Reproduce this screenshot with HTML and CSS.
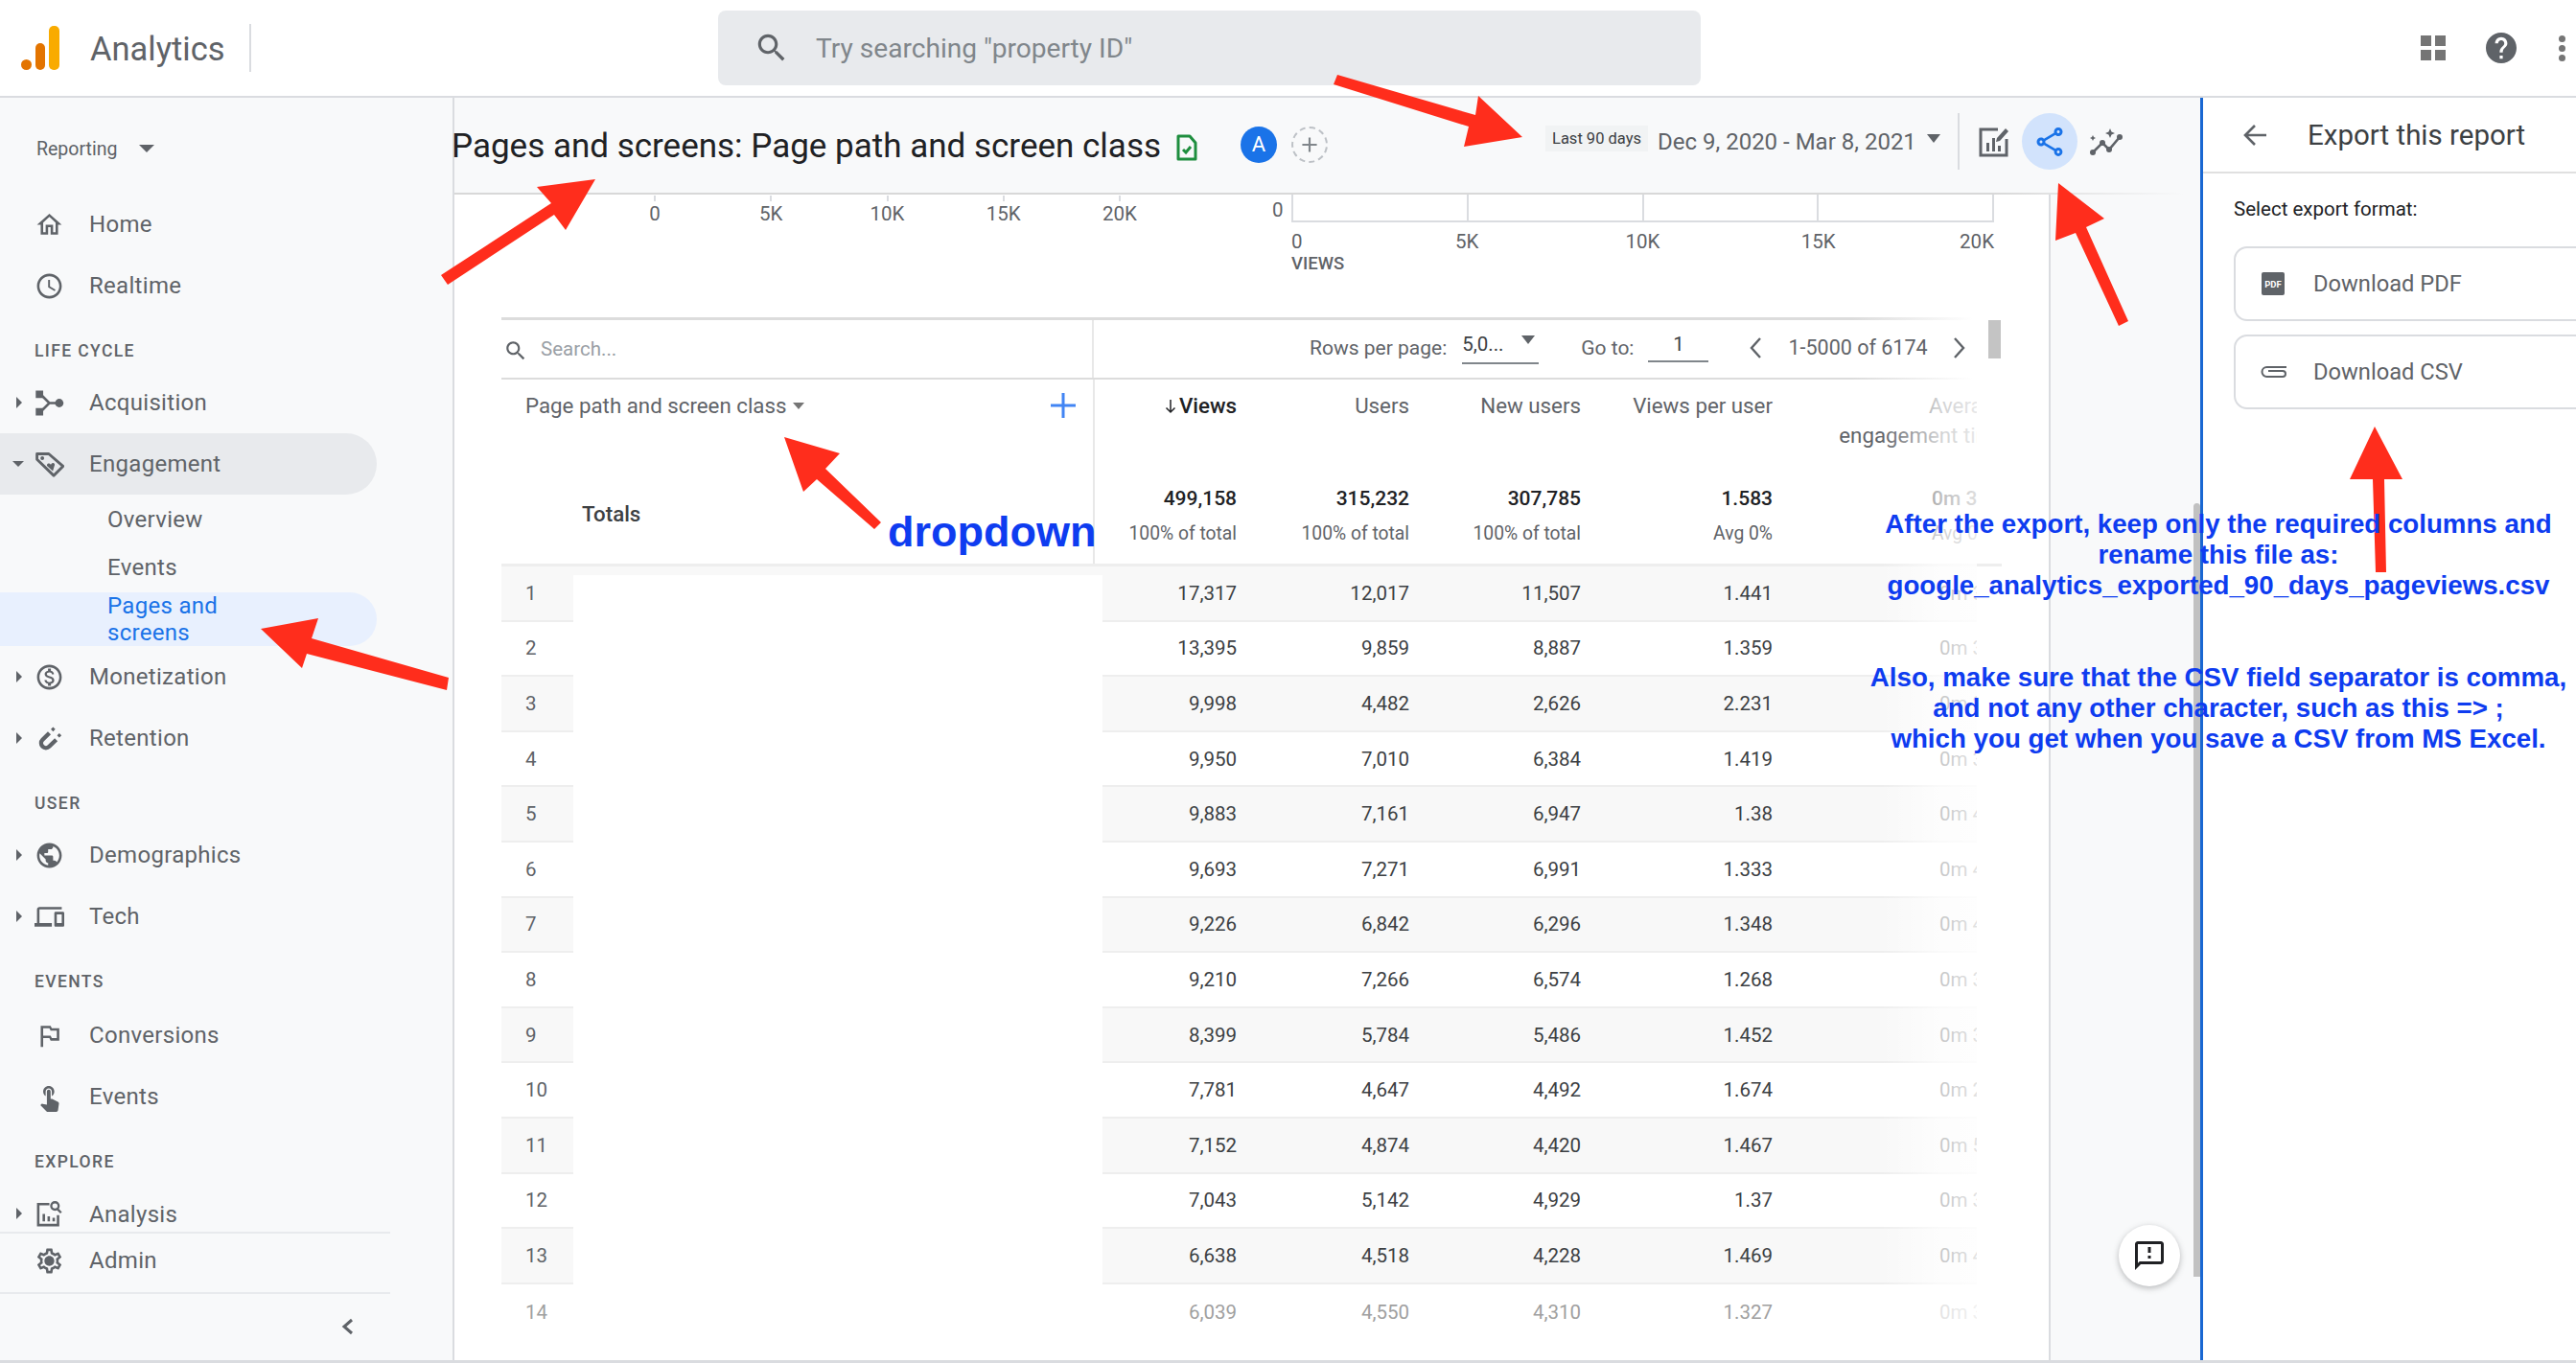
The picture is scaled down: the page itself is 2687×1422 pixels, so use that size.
FILE: index.html
```html
<!DOCTYPE html>
<html lang="en">
<head>
    <meta charset="UTF-8">
    <title>Analytics - Pages and screens</title>
    <link rel="stylesheet" href="styles.css">
</head>
<body>
<div class="app">

    <header class="topbar">
        <div class="brand">
            <svg class="logo" viewBox="0 0 40 46"><circle cx="5.5" cy="40.5" r="5.5" fill="#e37400"/><rect x="15" y="18" width="10" height="28" rx="5" fill="#e37400"/><rect x="29" y="0" width="11" height="46" rx="5" fill="#f9ab00"/></svg>
            <span class="brand-name">Analytics</span>
        </div>
        <div class="global-search">
            <svg class="icon-search" viewBox="0 0 24 24"><path d="M15.5 14h-.79l-.28-.27C15.41 12.59 16 11.11 16 9.5 16 5.91 13.09 3 9.5 3S3 5.91 3 9.5 5.91 16 9.5 16c1.61 0 3.09-.59 4.23-1.57l.27.28v.79l5 4.99L20.49 19l-4.99-5zm-6 0C7.01 14 5 11.99 5 9.5S7.01 5 9.5 5 14 7.01 14 9.5 11.99 14 9.5 14z"/></svg>
            <span>Try searching "property ID"</span>
        </div>
        <div class="top-actions">
            <div class="apps"><i></i><i></i><i></i><i></i></div>
            <svg class="icon-help" viewBox="2 2 20 20"><path d="M12 2C6.48 2 2 6.48 2 12s4.48 10 10 10 10-4.48 10-10S17.52 2 12 2zm1 17h-2v-2h2v2zm2.07-7.75l-.9.92C13.45 12.9 13 13.5 13 15h-2v-.5c0-1.1.45-2.1 1.17-2.83l1.24-1.26c.37-.36.59-.86.59-1.41 0-1.1-.9-2-2-2s-2 .9-2 2H8c0-2.21 1.79-4 4-4s4 1.79 4 4c0 .88-.36 1.68-.93 2.25z"/></svg>
            <div class="more"><i></i><i></i><i></i></div>
        </div>
    </header>

    <div class="workspace">
        <aside class="sidebar">
            <div class="reporting"><span>Reporting</span><b class="caret"></b></div>
            <nav class="nav">
                <a class="nav-item">
                    <svg viewBox="0 0 24 24"><path d="M12 5.69l5 4.5V18h-2v-6H9v6H7v-7.81l5-4.5M12 3L2 12h3v8h6v-6h2v6h6v-8h3L12 3z"/></svg>Home
                </a>
                <a class="nav-item">
                    <svg viewBox="0 0 24 24"><path d="M11.99 2C6.47 2 2 6.48 2 12s4.47 10 9.99 10C17.52 22 22 17.52 22 12S17.52 2 11.99 2zM12 20c-4.42 0-8-3.58-8-8s3.58-8 8-8 8 3.58 8 8-3.58 8-8 8zm.5-13H11v6l5.25 3.15.75-1.23-4.5-2.67z"/></svg>Realtime
                </a>
                <div class="nav-label">LIFE CYCLE</div>
                <a class="nav-item has-arrow">
                    <svg viewBox="0 0 24 24"><path d="M1 2h6v6H1zM1 16h6v6H1z"/><path d="M6 6l6 6-6 6M12 12h7" fill="none" stroke="#5f6368" stroke-width="2"/><circle cx="20" cy="12" r="3.4"/></svg>Acquisition
                </a>
                <a class="nav-item open">
                    <svg viewBox="0 0 24 24"><path d="M2 8V3.500h9.500L23 13.500l-7.500 7.500z" fill="none" stroke="#5f6368" stroke-width="2.200" stroke-linejoin="round"/><circle cx="6.300" cy="7" r="1.500"/><path d="M14.800 17.500l-4.300-3.900c-1.400-1.300.5-3.200 2-2l.7.6.5-.8c1.300-1.400 3.500.4 2.300 1.900z"/></svg>Engagement
                </a>
                <a class="nav-sub">Overview</a>
                <a class="nav-sub">Events</a>
                <a class="nav-sub active">Pages and<br>screens</a>
                <a class="nav-item has-arrow">
                    <svg viewBox="0 0 24 24"><path d="M12 2C6.48 2 2 6.48 2 12s4.48 10 10 10 10-4.48 10-10S17.52 2 12 2zm0 18c-4.41 0-8-3.59-8-8s3.59-8 8-8 8 3.59 8 8-3.59 8-8 8zm.31-8.860c-1.770-.45-2.340-.94-2.340-1.670 0-.84.79-1.430 2.100-1.430 1.380 0 1.900.66 1.940 1.640h1.710c-.05-1.340-.87-2.570-2.490-2.970V5H10.900v1.690c-1.510.32-2.720 1.300-2.720 2.810 0 1.790 1.490 2.690 3.660 3.210 1.950.46 2.340 1.150 2.340 1.870 0 .53-.39 1.390-2.100 1.390-1.600 0-2.230-.72-2.320-1.640H8.040c.1 1.700 1.360 2.660 2.860 2.970V19h2.340v-1.670c1.520-.29 2.720-1.160 2.730-2.770-.01-2.200-1.900-2.960-3.660-3.420z"/></svg>Monetization
                </a>
                <a class="nav-item has-arrow">
                    <svg viewBox="0 0 24 24"><path d="M12 7.500L6.500 13a3.800 3.800 0 0 0 5.400 5.400l5.600-5.400" fill="none" stroke="#5f6368" stroke-width="3.400"/><path d="M15 2.700l1.800 1.800L15 6.300l-1.800-1.800zM20 7.700l1.800 1.800-1.800 1.800-1.800-1.800z"/></svg>Retention
                </a>
                <div class="nav-label">USER</div>
                <a class="nav-item has-arrow">
                    <svg viewBox="0 0 24 24"><path d="M12 2C6.48 2 2 6.48 2 12s4.48 10 10 10 10-4.48 10-10S17.52 2 12 2zm-1 17.930c-3.950-.49-7-3.850-7-7.930 0-.62.08-1.210.21-1.790L9 15v1c0 1.100.9 2 2 2v1.930zm6.900-2.540c-.26-.81-1-1.390-1.900-1.390h-1v-3c0-.55-.45-1-1-1H8v-2h2c.55 0 1-.45 1-1V7h2c1.100 0 2-.9 2-2v-.41c2.930 1.190 5 4.060 5 7.410 0 2.080-.8 3.970-2.100 5.390z"/></svg>Demographics
                </a>
                <a class="nav-item has-arrow">
                    <svg viewBox="0 0 24 24"><path d="M4 6h18V4H4c-1.100 0-2 .9-2 2v11H0v3h14v-3H4V6zm19 2h-6c-.55 0-1 .45-1 1v10c0 .55.45 1 1 1h6c.55 0 1-.45 1-1V9c0-.55-.45-1-1-1zm-1 9h-4v-7h4v7z"/></svg>Tech
                </a>
                <div class="nav-label tall">EVENTS</div>
                <a class="nav-item">
                    <svg viewBox="0 0 24 24"><path d="M14 6l-1-2H5v17h2v-7h5l1 2h7V6h-6zm4 8h-4l-1-2H7V6h5l1 2h5v6z"/></svg>Conversions
                </a>
                <a class="nav-item">
                    <svg viewBox="0 0 24 24"><path d="M9 11.240V7.500C9 6.120 10.120 5 11.500 5S14 6.120 14 7.500v3.740c1.210-.81 2-2.180 2-3.740C16 5.010 13.990 3 11.500 3S7 5.010 7 7.500c0 1.560.79 2.930 2 3.740zm9.840 4.630l-4.540-2.260c-.17-.07-.35-.11-.54-.11H13v-6c0-.83-.67-1.500-1.500-1.500S10 6.670 10 7.500v10.740l-3.430-.72c-.08-.01-.15-.03-.24-.03-.31 0-.59.13-.79.33l-.79.8 4.940 4.940c.27.27.65.44 1.060.44h6.790c.75 0 1.330-.55 1.440-1.280l.75-5.270c.01-.07.02-.14.02-.2 0-.62-.38-1.160-.91-1.380z"/></svg>Events
                </a>
                <div class="nav-label">EXPLORE</div>
                <a class="nav-item has-arrow clipped">
                    <svg viewBox="0 0 24 24"><path d="M12 4H3v17h16v-8" fill="none" stroke="#5f6368" stroke-width="2"/><path d="M6.500 12h2v6h-2zM10.500 14h2v4h-2zM14.500 15h2v3h-2z"/><circle cx="16.500" cy="5.500" r="3" fill="none" stroke="#5f6368" stroke-width="1.800"/><path d="M18.500 8l3 3" stroke="#5f6368" stroke-width="1.800"/></svg>Analysis
                </a>
            </nav>
            <a class="nav-item admin">
                <svg viewBox="0 0 24 24"><path d="M19.430 12.980c.04-.32.07-.64.07-.98 0-.34-.03-.66-.07-.98l2.110-1.650c.19-.15.24-.42.12-.64l-2-3.460c-.09-.16-.26-.25-.44-.25-.06 0-.12.01-.17.03l-2.490 1c-.52-.4-1.080-.73-1.690-.98l-.38-2.650C14.460 2.180 14.250 2 14 2h-4c-.25 0-.46.18-.49.42l-.38 2.650c-.61.25-1.170.59-1.690.98l-2.490-1c-.06-.02-.12-.03-.18-.03-.17 0-.34.09-.43.25l-2 3.460c-.13.22-.07.49.12.64l2.110 1.650c-.04.32-.07.65-.07.98 0 .33.03.66.07.98l-2.110 1.650c-.19.15-.24.42-.12.64l2 3.460c.09.16.26.25.44.25.06 0 .12-.01.17-.03l2.490-1c.52.4 1.080.73 1.690.98l.38 2.650c.03.24.24.42.49.42h4c.25 0 .46-.18.49-.42l.38-2.650c.61-.25 1.170-.59 1.690-.98l2.490 1c.06.02.12.03.18.03.17 0 .34-.09.43-.25l2-3.460c.12-.22.07-.49-.12-.64l-2.110-1.650zm-1.980-1.710c.04.31.05.52.05.73 0 .21-.02.43-.05.73l-.14 1.130.89.7 1.080.84-.7 1.210-1.270-.51-1.040-.42-.9.68c-.43.32-.84.56-1.250.73l-1.060.43-.16 1.130-.2 1.350h-1.400l-.19-1.350-.16-1.130-1.060-.43c-.43-.18-.83-.41-1.230-.71l-.91-.7-1.060.43-1.270.51-.7-1.210 1.080-.84.89-.7-.14-1.130c-.03-.31-.05-.54-.05-.74s.02-.43.05-.73l.14-1.130-.89-.7-1.080-.84.7-1.210 1.270.51 1.040.42.9-.68c.43-.32.84-.56 1.250-.73l1.060-.43.16-1.130.2-1.350h1.390l.19 1.350.16 1.130 1.060.43c.43.18.83.41 1.230.71l.91.7 1.060-.43 1.270-.51.7 1.210-1.070.85-.89.7.14 1.130zM12 8c-2.210 0-4 1.790-4 4s1.790 4 4 4 4-1.790 4-4-1.790-4-4-4z"/></svg>Admin
            </a>
            <div class="collapse">
                <svg viewBox="0 0 14 20"><path d="M11 3L3 10l8 7" fill="none" stroke="#5f6368" stroke-width="3"/></svg>
            </div>
        </aside>

        <main class="main">
            <div class="toolbar">
                <h1 class="report-title">Pages and screens: Page path and screen class</h1>
                <svg class="icon-doc" viewBox="0 0 24 28"><path d="M3 2h12l6 7v17H3z" fill="none" stroke="#1e8e3e" stroke-width="3" stroke-linejoin="round"/><path d="M8 16l3 3 5-6" fill="none" stroke="#1e8e3e" stroke-width="3"/></svg>
                <span class="avatar">A</span>
                <span class="add-compare">
                    <svg viewBox="0 0 24 24"><path d="M12 5v14M5 12h14" stroke="#80868b" stroke-width="2"/></svg>
                </span>
                <div class="date-range">
                    <span class="date-chip">Last 90 days</span>
                    <span class="date-text">Dec 9, 2020 - Mar 8, 2021</span>
                    <b class="caret small"></b>
                </div>
                <div class="tool-icons">
                    <svg class="tool-edit" viewBox="0 0 32 32"><path d="M20 3H2v27h27V13" fill="none" stroke="#5f6368" stroke-width="3"/><path d="M8 17h3v9H8zM14 12h3v14h-3zM20 20h3v6h-3z" fill="#5f6368"/><path d="M19 12l-1 4 4-1L31 5l-3-3z" fill="#5f6368"/></svg>
                    <span class="share-button">
                        <svg viewBox="0 0 24 24"><path d="M18 16.080c-.76 0-1.440.3-1.960.77L8.910 12.700c.05-.23.09-.46.09-.7s-.04-.47-.09-.7l7.050-4.110c.54.5 1.250.81 2.040.81 1.660 0 3-1.340 3-3s-1.340-3-3-3-3 1.340-3 3c0 .24.04.47.09.7L8.040 9.810C7.500 9.310 6.790 9 6 9c-1.660 0-3 1.340-3 3s1.340 3 3 3c.79 0 1.500-.31 2.040-.81l7.120 4.160c-.05.21-.08.43-.08.65 0 1.610 1.310 2.920 2.920 2.920s2.920-1.310 2.920-2.920-1.310-2.920-2.920-2.920zM18 4c.55 0 1 .45 1 1s-.45 1-1 1-1-.45-1-1 .45-1 1-1zM6 13c-.55 0-1-.45-1-1s.45-1 1-1 1 .45 1 1-.45 1-1 1zm12 7.020c-.55 0-1-.45-1-1s.45-1 1-1 1 .45 1 1-.45 1-1 1z"/></svg>
                    </span>
                    <svg class="tool-insights" viewBox="0 0 36 28"><path d="M4 25l10-10 7 7 11-13" fill="none" stroke="#5f6368" stroke-width="2.600"/><circle cx="4" cy="25" r="3"/><circle cx="14" cy="15" r="3"/><circle cx="21" cy="22" r="3"/><circle cx="32" cy="9" r="3"/><path d="M22 0l1.500 3.500L27 5l-3.500 1.500L22 10l-1.500-3.500L17 5l3.500-1.500zM4 7l1 2 2 1-2 1-1 2-1-2-2-1 2-1z"/></svg>
                </div>
            </div>

            <div class="content">
                <section class="report">
                    <div class="charts">
                        <div class="axis axis-left">
                            <span class="tick">0</span><span class="tick">5K</span><span class="tick">10K</span><span class="tick">15K</span><span class="tick">20K</span>
                        </div>
                        <div class="chart-right">
                            <span class="zero">0</span>
                            <div class="plot-wrap">
                                <div class="plot"><i></i><i></i><i></i><i></i></div>
                                <div class="axis axis-right">
                                    <span class="tick tick-start">0</span><span class="tick">5K</span><span class="tick">10K</span><span class="tick">15K</span><span class="tick tick-end">20K</span>
                                </div>
                                <div class="axis-title">VIEWS</div>
                            </div>
                        </div>
                    </div>

                    <div class="table">
                        <div class="table-top">
                            <div class="table-search">
                                <svg viewBox="0 0 24 24"><path d="M15.500 14h-.79l-.28-.27C15.410 12.590 16 11.110 16 9.500 16 5.910 13.090 3 9.500 3S3 5.910 3 9.500 5.910 16 9.500 16c1.610 0 3.090-.59 4.230-1.570l.27.28v.79l5 4.990L20.490 19l-4.990-5zm-6 0C7.010 14 5 11.990 5 9.500S7.010 5 9.500 5 14 7.010 14 9.500 11.990 14 9.500 14z"/></svg>
                                <span>Search...</span>
                            </div>
                            <div class="pager">
                                <span class="rows-label">Rows per page:</span>
                                <span class="rows-select">5,0...<b class="caret small"></b></span>
                                <span class="goto-label">Go to:</span>
                                <span class="goto-input">1</span>
                                <svg class="page-arrow first" viewBox="0 0 14 24"><path d="M12 2L3 12l9 10" fill="none" stroke="#5f6368" stroke-width="2.400"/></svg>
                                <span class="page-range">1-5000 of 6174</span>
                                <svg class="page-arrow" viewBox="0 0 14 24"><path d="M2 2l9 10-9 10" fill="none" stroke="#5f6368" stroke-width="2.400"/></svg>
                                <span class="table-thumb"></span>
                            </div>
                        </div>

                        <div class="grid head">
                            <div class="dim-head">
                                <span>Page path and screen class</span><b class="caret tiny"></b>
                                <svg class="plus" viewBox="0 0 26 26"><path d="M13 0v26M0 13h26" stroke="#4285f4" stroke-width="3"/></svg>
                            </div>
                            <div class="num strong"><svg class="sort" viewBox="0 0 12 16"><path d="M6 1v13M1.500 9.500L6 14l4.500-4.500" fill="none" stroke="#202124" stroke-width="1.500"/></svg>Views</div>
                            <div class="num">Users</div>
                            <div class="num">New users</div>
                            <div class="num">Views per user</div>
                            <div class="last-head"><span>Average<br>engagement time</span></div>
                        </div>

                        <div class="grid totals">
                            <div class="totals-label">Totals</div>
                            <div class="num"><b>499,158</b><br>100% of total</div>
                            <div class="num"><b>315,232</b><br>100% of total</div>
                            <div class="num"><b>307,785</b><br>100% of total</div>
                            <div class="num"><b>1.583</b><br>Avg 0%</div>
                            <div class="time"><b>0m 38s</b><br>Avg 0%</div>
                        </div>

                        <div class="rows">
                            <div class="grid row"><div class="idx">1</div><div class="num">17,317</div><div class="num">12,017</div><div class="num">11,507</div><div class="num">1.441</div><div class="time">0m 31s</div></div>
                            <div class="grid row"><div class="idx">2</div><div class="num">13,395</div><div class="num">9,859</div><div class="num">8,887</div><div class="num">1.359</div><div class="time">0m 39s</div></div>
                            <div class="grid row"><div class="idx">3</div><div class="num">9,998</div><div class="num">4,482</div><div class="num">2,626</div><div class="num">2.231</div><div class="time">0m 28s</div></div>
                            <div class="grid row"><div class="idx">4</div><div class="num">9,950</div><div class="num">7,010</div><div class="num">6,384</div><div class="num">1.419</div><div class="time">0m 36s</div></div>
                            <div class="grid row"><div class="idx">5</div><div class="num">9,883</div><div class="num">7,161</div><div class="num">6,947</div><div class="num">1.38</div><div class="time">0m 42s</div></div>
                            <div class="grid row"><div class="idx">6</div><div class="num">9,693</div><div class="num">7,271</div><div class="num">6,991</div><div class="num">1.333</div><div class="time">0m 41s</div></div>
                            <div class="grid row"><div class="idx">7</div><div class="num">9,226</div><div class="num">6,842</div><div class="num">6,296</div><div class="num">1.348</div><div class="time">0m 44s</div></div>
                            <div class="grid row"><div class="idx">8</div><div class="num">9,210</div><div class="num">7,266</div><div class="num">6,574</div><div class="num">1.268</div><div class="time">0m 37s</div></div>
                            <div class="grid row"><div class="idx">9</div><div class="num">8,399</div><div class="num">5,784</div><div class="num">5,486</div><div class="num">1.452</div><div class="time">0m 33s</div></div>
                            <div class="grid row"><div class="idx">10</div><div class="num">7,781</div><div class="num">4,647</div><div class="num">4,492</div><div class="num">1.674</div><div class="time">0m 29s</div></div>
                            <div class="grid row"><div class="idx">11</div><div class="num">7,152</div><div class="num">4,874</div><div class="num">4,420</div><div class="num">1.467</div><div class="time">0m 51s</div></div>
                            <div class="grid row"><div class="idx">12</div><div class="num">7,043</div><div class="num">5,142</div><div class="num">4,929</div><div class="num">1.37</div><div class="time">0m 35s</div></div>
                            <div class="grid row"><div class="idx">13</div><div class="num">6,638</div><div class="num">4,518</div><div class="num">4,228</div><div class="num">1.469</div><div class="time">0m 47s</div></div>
                            <div class="grid row fade"><div class="idx">14</div><div class="num">6,039</div><div class="num">4,550</div><div class="num">4,310</div><div class="num">1.327</div><div class="time">0m 38s</div></div>
                        </div>

                        <div class="redact"></div>
                        <div class="edge-fade"></div>
                    </div>
                </section>
                <div class="gutter">
                    <span class="feedback">
                        <svg viewBox="0 0 24 24"><path d="M20 2H4c-1.100 0-1.990.9-1.990 2L2 22l4-4h14c1.100 0 2-.9 2-2V4c0-1.100-.9-2-2-2zm0 14H5.170l-.59.59-.58.58V4h16v12zm-9-4h2v2h-2zm0-6h2v4h-2z"/></svg>
                    </span>
                </div>
            </div>
            <span class="main-thumb"></span>
        </main>

        <aside class="export-panel">
            <div class="panel-head">
                <svg class="panel-back" viewBox="0 0 26 24"><path d="M25 12H3M13 2L3 12l10 10" fill="none" stroke="#5f6368" stroke-width="2.600"/></svg>
                <h2>Export this report</h2>
            </div>
            <div class="panel-body">
                <p>Select export format:</p>
                <div class="export-option"><span class="pdf-badge">PDF</span>Download PDF</div>
                <div class="export-option">
                    <svg class="clip" viewBox="0 0 30 16"><path d="M28 3H7.500a5 5 0 0 0 0 10H24a3 3 0 0 0 0-6H9" fill="none" stroke="#5f6368" stroke-width="2"/></svg>
                    Download CSV
                </div>
            </div>
        </aside>
    </div>
    <div class="page-end"></div>

    <!-- annotations drawn on top of the screenshot -->
    <svg class="arrows" viewBox="0 0 2687 1422">
        <polygon points="460,287 575,212 560,195 621,187 590,240 578,224 467,297"/>
        <polygon points="1395,78 1539,120 1542,100 1588,143 1527,153 1532,132 1391,88"/>
        <polygon points="2147,191 2195,228 2176,237 2220,335 2210,340 2165,243 2144,251"/>
        <polygon points="818,456 876,473 861,489 919,545 912,552 852,500 838,513"/>
        <polygon points="272,656 332,645 325,666 468,707 466,720 320,682 315,697"/>
        <polygon points="2477,445 2506,500 2487,500 2489,597 2478,597 2475,500 2451,500"/>
    </svg>
    <div class="note note-dropdown">dropdown</div>
    <div class="note note-rename">After the export, keep only the required columns and<br>rename this file as:<br>google_analytics_exported_90_days_pageviews.csv</div>
    <div class="note note-separator">Also, make sure that the CSV field separator is comma,<br>and not any other character, such as this =&gt; ;<br>which you get when you save a CSV from MS Excel.</div>
</div>
</body>
</html>
```

FILE: styles.css
```css
* {
    box-sizing: border-box;
}
html, body {
    margin: 0;
    padding: 0;
}
body {
    width: 2687px;
    height: 1422px;
    overflow: hidden;
    background: #fff;
    color: #5f6368;
    font-family: Roboto, sans-serif;
    font-size: 20.5px;
}
svg {
    display: block;
    flex: none;
    fill: #5f6368;
}
.app {
    position: relative;
    width: 2687px;
    height: 1422px;
    display: flex;
    flex-direction: column;
    overflow: hidden;
}

/* top bar */
.topbar {
    height: 102px;
    flex: none;
    display: flex;
    align-items: center;
    border-bottom: 2px solid #dadce0;
    background: #fff;
}
.brand {
    width: 749px;
    display: flex;
    align-items: center;
    padding-left: 22px;
}
.logo {
    width: 40px;
    height: 46px;
}
.brand-name {
    margin-left: 32px;
    padding-right: 25px;
    height: 50px;
    line-height: 52px;
    font-size: 34.5px;
    border-right: 2px solid #dadce0;
}
.global-search {
    width: 1025px;
    height: 78px;
    display: flex;
    align-items: center;
    background: #e8eaed;
    border-radius: 8px;
    padding-left: 37px;
    font-size: 28.1px;
    color: #80868b;
}
.icon-search {
    width: 38px;
    height: 38px;
    margin-right: 27px;
}
.top-actions {
    flex: 1;
    display: flex;
    align-items: center;
    padding-left: 751px;
}
.apps {
    width: 26px;
    display: grid;
    grid-template-columns: 11px 11px;
    grid-auto-rows: 11px;
    gap: 4px;
}
.apps i {
    background: #757575;
}
.icon-help {
    width: 32px;
    height: 32px;
    margin-left: 42px;
}
.more {
    margin-left: 44px;
    display: flex;
    flex-direction: column;
    gap: 3px;
}
.more i {
    width: 7px;
    height: 7px;
    border-radius: 50%;
    background: #757575;
}
.caret {
    display: inline-block;
    width: 0;
    height: 0;
    border-left: 8px solid transparent;
    border-right: 8px solid transparent;
    border-top: 8px solid #5f6368;
}
.caret.small {
    border-left-width: 7px;
    border-right-width: 7px;
    border-top-width: 9px;
}
.caret.tiny {
    border-left-width: 6px;
    border-right-width: 6px;
    border-top-width: 7px;
    border-top-color: #757575;
}

.workspace {
    flex: 1;
    display: flex;
    min-height: 0;
}

/* left navigation */
.sidebar {
    width: 474px;
    flex: none;
    display: flex;
    flex-direction: column;
    background: #f8f9fa;
    border-right: 2px solid #dadce0;
    font-size: 24px;
    letter-spacing: 0.3px;
}
.reporting {
    height: 100px;
    padding: 6px 0 0 38px;
    display: flex;
    align-items: center;
    font-size: 19.5px;
    letter-spacing: 0;
}
.reporting .caret {
    margin-left: 23px;
}
.nav {
    height: 1085px;
    flex: none;
    display: flex;
    flex-direction: column;
    overflow: hidden;
    border-bottom: 2px solid #e8eaed;
    width: 407px;
}
.nav-item {
    position: relative;
    height: 64px;
    flex: none;
    width: 393px;
    display: flex;
    align-items: center;
    padding-left: 36px;
    color: #5f6368;
}
.nav-item svg {
    width: 31px;
    height: 31px;
    margin-right: 26px;
}
.nav-item.has-arrow::before,
.nav-item.open::before {
    content: "";
    position: absolute;
    left: 17px;
    top: 26px;
    border-top: 6px solid transparent;
    border-bottom: 6px solid transparent;
    border-left: 6px solid #5f6368;
}
.nav-item.open {
    background: #e8eaed;
    border-radius: 0 32px 32px 0;
}
.nav-item.open::before {
    left: 13px;
    top: 29px;
    border-left: 6px solid transparent;
    border-right: 6px solid transparent;
    border-top: 6px solid #5f6368;
    border-bottom: 0;
}
.nav-item.clipped {
    height: 53px;
    flex: none;
    padding-top: 12px;
}
.nav-item.clipped::before {
    top: 26px;
}
.nav-label {
    height: 58px;
    flex: none;
    padding: 13px 0 0 36px;
    display: flex;
    align-items: center;
    font-size: 17.5px;
    font-weight: 500;
    letter-spacing: 1.4px;
}
.nav-label.tall {
    height: 60px;
    padding-bottom: 2px;
}
.nav-sub {
    height: 50px;
    flex: none;
    width: 393px;
    display: flex;
    align-items: center;
    padding: 2px 0 0 112px;
}
.nav-sub.active {
    height: 56px;
    margin-top: 2px;
    padding-top: 0;
    line-height: 28px;
    color: #1a73e8;
    background: #e8f0fe;
    border-radius: 0 28px 28px 0;
}
.admin {
    height: 63px;
    width: 407px;
    padding-bottom: 5px;
    border-bottom: 2px solid #e8eaed;
}
.collapse {
    flex: 1;
    padding: 24px 0 0 356px;
}
.collapse svg {
    width: 14px;
    height: 20px;
}

/* report area */
.main {
    position: relative;
    flex: 1;
    display: flex;
    flex-direction: column;
    background: #f8f9fa;
    min-width: 0;
}
.toolbar {
    height: 101px;
    flex: none;
    display: flex;
    align-items: center;
    padding: 0 0 2px 0;
    border-bottom: 2px solid;
    border-image: linear-gradient(to right, #d8d8d8 88%, transparent 99%) 1;
}
.report-title {
    margin: 4px 0 0 -3px;
    font-size: 35px;
    font-weight: 400;
    color: #202124;
    white-space: nowrap;
    width: 755px;
}
.icon-doc {
    width: 24px;
    height: 28px;
    margin-top: 6px;
}
.avatar {
    width: 38px;
    height: 38px;
    margin-left: 44px;
    border-radius: 50%;
    background: #1a73e8;
    color: #fff;
    font-size: 22px;
    display: flex;
    align-items: center;
    justify-content: center;
}
.add-compare {
    width: 38px;
    height: 38px;
    margin-left: 15px;
    border: 2px dashed #bdc1c6;
    border-radius: 50%;
    display: flex;
    align-items: center;
    justify-content: center;
}
.add-compare svg {
    width: 26px;
    height: 26px;
}
.date-range {
    display: flex;
    align-items: center;
    margin-left: 227px;
    margin-top: -6px;
}
.date-chip {
    height: 27px;
    padding: 0 7px;
    margin-top: -6px;
    display: flex;
    align-items: center;
    font-size: 16.5px;
    background: #f1f3f4;
    color: #3c4043;
}
.date-text {
    margin-left: 10px;
    font-size: 24px;
}
.date-range .caret {
    margin: -6px 0 0 11px;
}
.tool-icons {
    margin-left: 18px;
    height: 59px;
    padding-left: 20px;
    display: flex;
    align-items: center;
    border-left: 2px solid #dadce0;
    margin-top: -6px;
}
.tool-edit {
    width: 32px;
    height: 32px;
}
.share-button {
    width: 58px;
    height: 59px;
    margin-left: 13px;
    border-radius: 50%;
    background: #d2e3fc;
    display: flex;
    align-items: center;
    justify-content: center;
}
.share-button svg {
    width: 36px;
    height: 36px;
    fill: #1a73e8;
}
.tool-insights {
    width: 36px;
    height: 28px;
    margin-left: 12px;
}

.content {
    flex: 1;
    display: flex;
    min-height: 0;
}
.report {
    width: 1665px;
    flex: none;
    background: #fff;
    border-right: 2px solid #dadce0;
    padding-left: 49px;
    overflow: hidden;
}
.gutter {
    flex: 1;
    display: flex;
    justify-content: flex-end;
    padding: 1075px 21px 0 0;
}
.feedback {
    width: 64px;
    height: 64px;
    border-radius: 50%;
    background: #fff;
    box-shadow: 0 2px 6px rgba(60, 64, 67, 0.35);
    display: flex;
    align-items: center;
    justify-content: center;
}
.feedback svg {
    width: 36px;
    height: 36px;
    fill: #202124;
}
.main-thumb {
    position: absolute;
    right: 0;
    top: 423px;
    width: 7px;
    height: 807px;
    background: #c1c1c1;
    border-radius: 4px 4px 0 0;
}

/* charts above the table */
.charts {
    height: 128px;
    display: flex;
}
.axis {
    display: flex;
    justify-content: space-between;
}
.tick {
    width: 0;
    display: flex;
    justify-content: center;
    white-space: nowrap;
}
.axis-left {
    margin-left: 160px;
    width: 485px;
    height: 32px;
}
.axis-left .tick {
    flex-direction: column;
    align-items: center;
}
.axis-left .tick::before {
    content: "";
    width: 2px;
    height: 6px;
    margin-bottom: 1px;
    background: #dadce0;
}
.chart-right {
    margin-left: 159px;
    display: flex;
}
.zero {
    width: 20px;
    padding-top: 4px;
}
.plot-wrap {
    width: 733px;
}
.plot {
    height: 29px;
    display: flex;
    border-left: 2px solid #dadce0;
    border-bottom: 2px solid #dadce0;
}
.plot i {
    flex: 1;
    border-right: 2px solid #dadce0;
}
.axis-right {
    margin-top: 8px;
}
.tick-start {
    justify-content: flex-start;
}
.tick-end {
    justify-content: flex-end;
}
.axis-title {
    font-size: 18.5px;
    font-weight: 500;
}

/* table */
.table {
    position: relative;
    width: 1565px;
    overflow: hidden;
}
.table-top {
    height: 65px;
    display: flex;
    border-top: 3px solid;
    border-bottom: 2px solid;
    border-image: linear-gradient(to right, #dcdcdc 90%, transparent 98%) 1;
}
.table-search {
    width: 618px;
    flex: none;
    display: flex;
    align-items: center;
    border-right: 2px solid #e8e8e8;
    color: #9aa0a6;
    padding-left: 2px;
}
.table-search svg {
    width: 26px;
    height: 26px;
    margin: 4px 13px 0 0;
}
.pager {
    flex: 1;
    display: flex;
    align-items: center;
    padding: 0 0 3px 225px;
    white-space: nowrap;
}
.rows-label,
.goto-label,
.page-range {
    font-size: 21px;
}
.page-range {
    font-size: 21.5px;
}
.rows-select {
    margin-left: 16px;
    width: 80px;
    height: 36px;
    padding-top: 3px;
    display: flex;
    align-items: flex-start;
    border-bottom: 2px solid #80868b;
    color: #3c4043;
    margin-top: -2px;
}
.rows-select .caret {
    margin: 3px 0 0 18px;
}
.goto-label {
    margin-left: 44px;
}
.goto-input {
    margin-left: 15px;
    width: 63px;
    height: 34px;
    padding-top: 3px;
    text-align: center;
    border-bottom: 2px solid #80868b;
    color: #3c4043;
    margin-top: -4px;
}
.page-arrow {
    width: 14px;
    height: 26px;
}
.page-arrow.first {
    margin-left: 42px;
}
.page-range {
    margin: 0 26px 0 27px;
}
.table-thumb {
    margin-left: 23px;
    width: 13px;
    height: 40px;
    background: #c4c4c4;
    flex: none;
    align-self: flex-start;
}
.grid {
    display: grid;
    grid-template-columns: 617px 150px 180px 179px 200px 213px;
}
.num {
    text-align: right;
    white-space: nowrap;
}
.head {
    height: 83px;
    line-height: 31px;
    padding-top: 12px;
    font-size: 22.3px;
}
.dim-head {
    display: flex;
    align-items: flex-start;
    height: 83px;
    margin-top: -12px;
    padding: 12px 0 0 25px;
    box-shadow: 2px 0 0 #e8e8e8;
}
.dim-head .caret {
    margin: 12px 0 0 6px;
}
.plus {
    width: 26px;
    height: 26px;
    margin: 2px 0 0 257px;
}
.strong {
    color: #202124;
    font-weight: 500;
    display: flex;
    align-items: center;
    justify-content: flex-end;
    height: 31px;
}
.sort {
    width: 12px;
    height: 16px;
    margin-right: 3px;
}
.last-head {
    overflow: hidden;
    white-space: nowrap;
}
.last-head span {
    display: block;
    width: 243px;
    text-align: right;
}
.totals {
    height: 112px;
    border-bottom: 3px solid #eee;
    line-height: 36px;
    padding-top: 23px;
    font-size: 19.3px;
}
.totals b {
    font-weight: 500;
    color: #202124;
    font-size: 21px;
}
.totals-label {
    margin-top: -23px;
    padding: 39px 0 0 84px;
    color: #3c4043;
    font-size: 22.3px;
    font-weight: 500;
    box-shadow: 2px 0 0 #e8e8e8;
}
.time {
    padding-left: 166px;
    white-space: nowrap;
    overflow: hidden;
}
.row .time {
    padding-left: 174px;
}
.rows {
    display: grid;
    grid-auto-rows: 57.6px;
}
.row {
    align-items: center;
    color: #3c4043;
    border-bottom: 2px solid #eee;
    width: 1539px;
}
.row:nth-child(odd) {
    background: #f8f8f8;
}
.idx {
    padding-left: 25px;
    color: #5f6368;
}
.row.fade {
    color: #a0a0a0;
    background: #fff;
    border-bottom: 0;
}
.row.fade .idx {
    color: #a0a0a0;
}
.redact {
    position: absolute;
    left: 75px;
    top: 269px;
    width: 552px;
    height: 801px;
    background: #fff;
}
.edge-fade {
    position: absolute;
    right: 26px;
    top: 65px;
    bottom: 0;
    width: 100px;
    background: linear-gradient(to right, rgba(255, 255, 255, 0), rgba(255, 255, 255, 0.7) 60%, rgba(255, 255, 255, 0.85));
    pointer-events: none;
}

/* export panel */
.export-panel {
    width: 392px;
    flex: none;
    background: #fff;
    border-left: 3px solid #1967d2;
}
.panel-head {
    height: 79px;
    display: flex;
    align-items: center;
    border-bottom: 2px solid #e0e0e0;
    padding-left: 41px;
}
.panel-back {
    width: 26px;
    height: 24px;
}
.panel-head h2 {
    margin: 0 0 0 42px;
    font-size: 29.5px;
    font-weight: 400;
    color: #3c4043;
    white-space: nowrap;
}
.panel-body {
    padding-left: 32px;
}
.panel-body p {
    margin: 0;
    height: 76px;
    line-height: 74px;
    color: #202124;
    font-size: 20.5px;
}
.export-option {
    width: 420px;
    height: 78px;
    margin-bottom: 14px;
    display: flex;
    align-items: center;
    padding-left: 27px;
    border: 2px solid #dadce0;
    border-radius: 14px;
    font-size: 23.7px;
}
.pdf-badge {
    width: 24px;
    height: 24px;
    margin-right: 30px;
    border-radius: 2px;
    background: #5f6368;
    color: #fff;
    font-size: 9.5px;
    font-weight: 700;
    display: flex;
    align-items: center;
    justify-content: center;
}
.clip {
    width: 30px;
    height: 16px;
    margin: 0 26px 0 -2px;
}
.page-end {
    height: 3px;
    flex: none;
    background: #dadce0;
}

/* red arrows and blue notes */
.arrows {
    position: absolute;
    left: 0;
    top: 0;
    width: 2687px;
    height: 1422px;
    fill: #ff2d1c;
    pointer-events: none;
}
.note {
    position: absolute;
    color: #0e3cf0;
    font-family: "Liberation Sans", Arial, sans-serif;
    font-weight: 700;
    text-align: center;
    white-space: nowrap;
}
.note-dropdown {
    left: 926px;
    top: 527px;
    font-size: 45px;
    line-height: 56px;
}
.note-rename,
.note-separator {
    left: 1934px;
    width: 760px;
    font-size: 27.7px;
    line-height: 32px;
}
.note-rename {
    top: 531px;
}
.note-separator {
    top: 691px;
}
```
